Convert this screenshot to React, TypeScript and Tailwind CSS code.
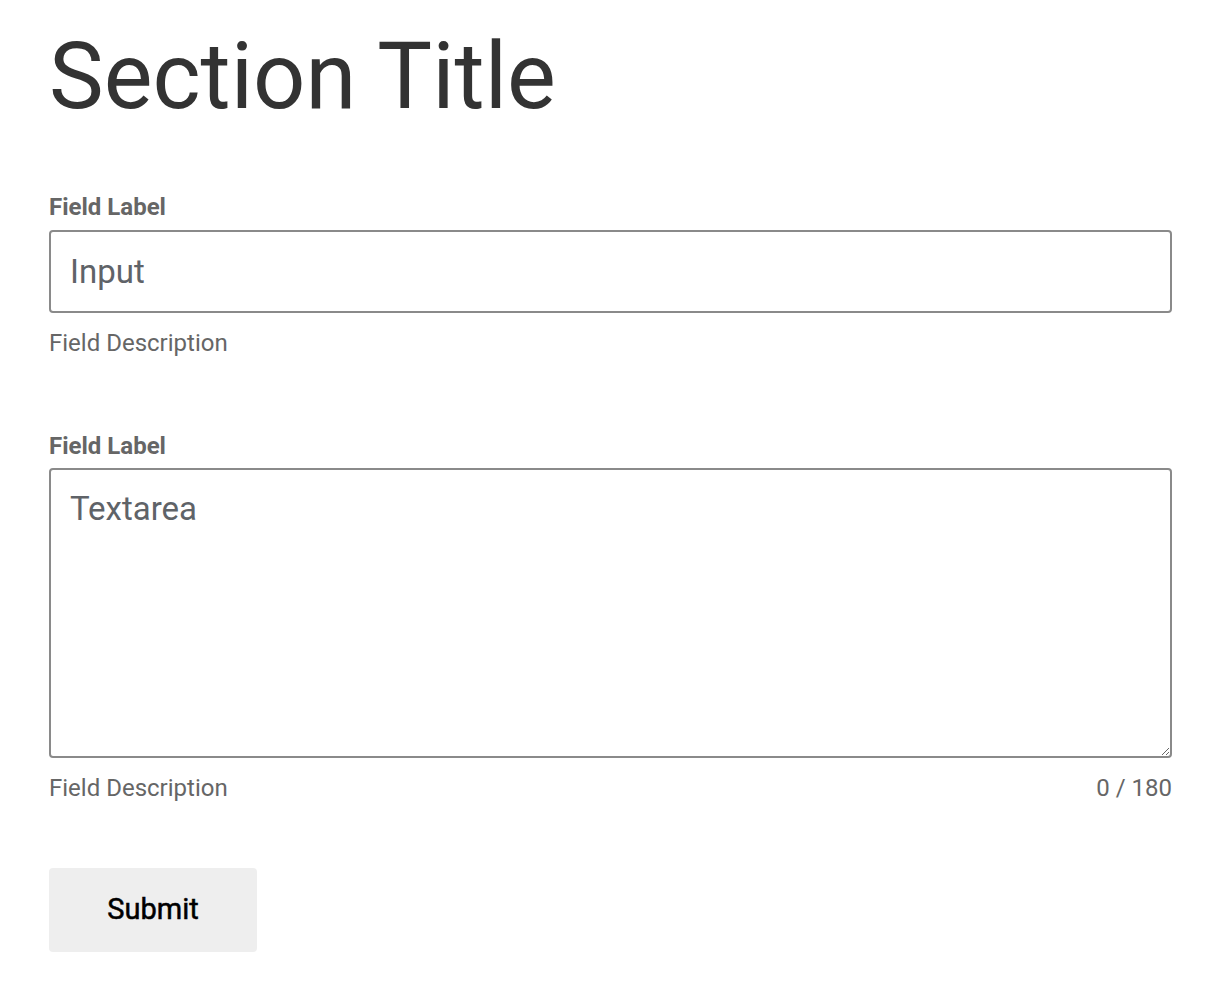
const font = { fontFamily: 'Roboto, "Liberation Sans", sans-serif' };

const Label = ({ children, className }: { children: string; className?: string }) => (
  <label className={`block text-[24px] font-bold leading-none text-[#666] ${className ?? ''}`}>
    {children}
  </label>
);

const App = () => {
  return (
    <div className="bg-white min-h-[1001px] pl-[49px] pr-[48px] pt-[31px]" style={font}>
      <h1 className="text-[92px] leading-none text-[#333] mb-[72px]">Section Title</h1>

      <form className="flex flex-col">
        <div className="flex flex-col">
          <Label className="mb-[11px]">Field Label</Label>
          <input
            type="text"
            placeholder="Input"
            className="w-full h-[83px] border-2 border-[#8a8a8a] rounded-[4px] px-[19px] text-[33px] text-[#333] placeholder:text-[#5f6368] outline-none"
          />
          <div className="mt-[18px] text-[24px] text-[#666] leading-none">Field Description</div>
        </div>

        <div className="flex flex-col mt-[79px]">
          <Label className="mb-[10px]">Field Label</Label>
          <textarea
            placeholder="Textarea"
            className="w-full h-[290px] border-2 border-[#8a8a8a] rounded-[4px] px-[19px] py-[18px] text-[33px] leading-tight text-[#333] placeholder:text-[#5f6368] outline-none"
          />
          <div className="mt-[18px] flex justify-between text-[24px] text-[#666] leading-none">
            <span>Field Description</span>
            <span>0 / 180</span>
          </div>
        </div>

        <div className="mt-[68px]">
          <button
            type="button"
            className="w-[208px] h-[84px] bg-[#eee] rounded-[4px] text-[29px] font-normal text-black [-webkit-text-stroke:0.5px_black]"
          >
            Submit
          </button>
        </div>
      </form>
    </div>
  );
};

export default App;
